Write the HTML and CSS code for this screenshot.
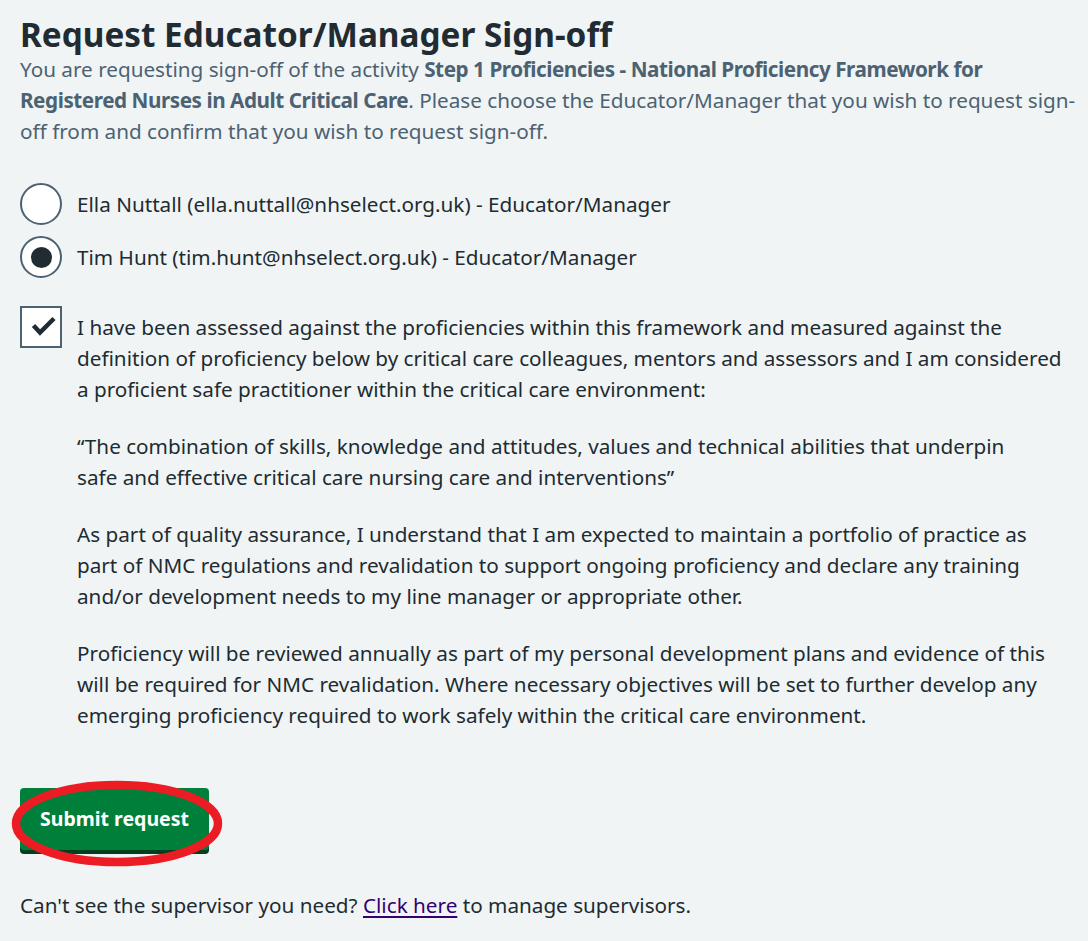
FILE: index.html
```html
<!DOCTYPE html>
<html lang="en">
<head>
<meta charset="utf-8">
<title>Request Educator/Manager Sign-off</title>
<link rel="stylesheet" href="styles.css">
</head>
<body>
<main class="page">
  <h1 class="title">Request Educator/Manager Sign-off</h1>
  <p class="intro">You are requesting sign-off of the activity <strong>Step 1 Proficiencies - National Proficiency Framework for<br>Registered Nurses in Adult Critical Care</strong>. Please choose the Educator/Manager that you wish to request sign-<br>off from and confirm that you wish to request sign-off.</p>

  <div class="radios">
    <label class="radio">
      <span class="radio-circle"></span>
      <span class="radio-label">Ella Nuttall (ella.nuttall@nhselect.org.uk) - Educator/Manager</span>
    </label>
    <label class="radio">
      <span class="radio-circle checked"><span class="radio-dot"></span></span>
      <span class="radio-label">Tim Hunt (tim.hunt@nhselect.org.uk) - Educator/Manager</span>
    </label>
  </div>

  <div class="checkbox">
    <span class="checkbox-box">
      <svg class="tick" width="38" height="38" viewBox="0 0 38 38"><polyline points="11.5,17.5 18,24.5 32,10.5" fill="none" stroke="#212b32" stroke-width="4.5" stroke-linejoin="miter"/></svg>
    </span>
    <div class="checkbox-label">
      <p>I have been assessed against the proficiencies within this framework and measured against the<br>definition of proficiency below by critical care colleagues, mentors and assessors and I am considered<br>a proficient safe practitioner within the critical care environment:</p>
      <p>“The combination of skills, knowledge and attitudes, values and technical abilities that underpin<br>safe and effective critical care nursing care and interventions”</p>
      <p>As part of quality assurance, I understand that I am expected to maintain a portfolio of practice as<br>part of NMC regulations and revalidation to support ongoing proficiency and declare any training<br>and/or development needs to my line manager or appropriate other.</p>
      <p>Proficiency will be reviewed annually as part of my personal development plans and evidence of this<br>will be required for NMC revalidation. Where necessary objectives will be set to further develop any<br>emerging proficiency required to work safely within the critical care environment.</p>
    </div>
  </div>

  <div class="actions">
    <button class="button" type="button">Submit request</button>
    <svg class="highlight" width="230" height="100" viewBox="0 0 230 100"><ellipse cx="113" cy="50.5" rx="101" ry="38.5" fill="none" stroke="#ec1c24" stroke-width="8.5"/></svg>
  </div>

  <p class="footer">Can't see the supervisor you need? <a href="#" class="link">Click here</a> to manage supervisors.</p>
</main>
</body>
</html>
```
FILE: styles.css
```css
html { background: #f0f4f5; }
body {
  margin: 0;
  background: #f0f4f5;
  color: #212b32;
  font-family: "Noto Sans", "Open Sans", sans-serif;
  font-size: 20.7px;
  line-height: 31px;
}
.page {
  padding: 14px 4px 0 20px;
}
.title {
  margin: 0;
  font-size: 33.3px;
  line-height: 40px;
  font-weight: 700;
  color: #212b32;
}
.intro {
  margin: 0;
  color: #4c6272;
}
.intro strong {
  font-weight: 700;
  letter-spacing: -0.45px;
}

.radios {
  margin-top: 36px;
  display: flex;
  flex-direction: column;
  gap: 11px;
}
.radio {
  display: flex;
  align-items: center;
  gap: 15px;
}
.radio-circle {
  box-sizing: border-box;
  width: 42px;
  height: 42px;
  border: 2.5px solid #4c6272;
  border-radius: 50%;
  background: #ffffff;
  display: flex;
  align-items: center;
  justify-content: center;
  flex: none;
}
.radio-dot {
  width: 21px;
  height: 21px;
  border-radius: 50%;
  background: #212b32;
}

.checkbox {
  margin-top: 28px;
  display: flex;
  align-items: flex-start;
  gap: 15px;
}
.checkbox-box {
  box-sizing: border-box;
  width: 42px;
  height: 42px;
  border: 2.5px solid #4c6272;
  background: #ffffff;
  flex: none;
  position: relative;
}
.tick { display: block; position: absolute; left: -0.5px; top: -0.5px; }
.checkbox-label {
  padding-top: 5.5px;
}
.checkbox-label p { margin: 0 0 26px; }
.checkbox-label p:last-child { margin-bottom: 0; }

.actions {
  margin-top: 57.5px;
  position: relative;
  width: 230px;
}
.button {
  display: block;
  margin: 0;
  border: 0;
  border-radius: 4px;
  background: #007f3b;
  box-shadow: 0 4px 0 #00401e;
  color: #ffffff;
  font-family: "Noto Sans", "Open Sans", sans-serif;
  font-size: 19.5px;
  font-weight: 700;
  line-height: 32px;
  padding: 15px 20px;
  cursor: pointer;
}
.highlight {
  position: absolute;
  left: -16px;
  top: -15px;
}
.footer {
  margin: 39.5px 0 0;
}
.link {
  color: #330072;
  text-decoration: underline;
  text-underline-offset: 3px;
}
```
